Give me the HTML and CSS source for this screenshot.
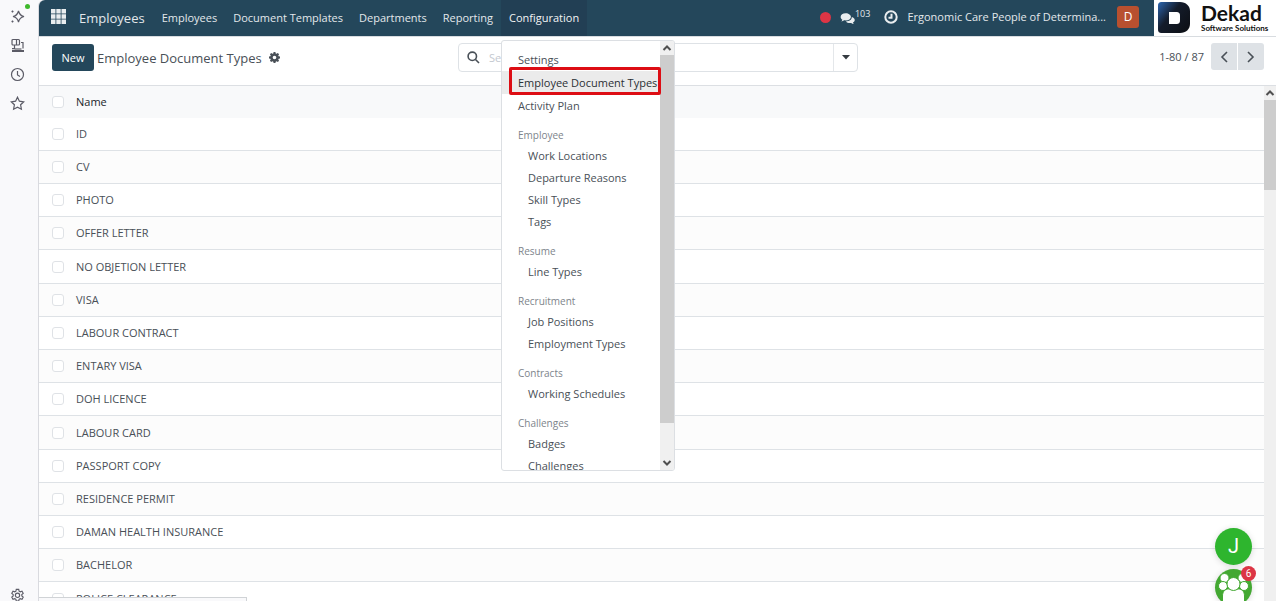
FILE: index.html
```html
<!DOCTYPE html>
<html lang="en">
<head>
<meta charset="utf-8">
<title>Employee Document Types</title>
<link rel="stylesheet" href="styles.css">
</head>
<body>
<aside class="rail">
  <button class="rail-btn" aria-label="Assistant"><svg width="15" height="15" viewBox="0 0 15 15"><path d="M8.500 2Q9.500 6.500 14 7.500Q9.500 8.500 8.500 13Q7.500 8.500 3 7.500Q7.500 6.500 8.500 2Z"/><path d="M2.500 1.500v2M1.500 2.500h2M2.500 11.500v2M1.500 12.500h2"/></svg><i class="dot"></i></button>
  <button class="rail-btn" aria-label="Workspaces"><svg width="15" height="15" viewBox="0 0 15 15"><rect x="2" y="1.500" width="7.500" height="5.500" rx="1"/><path d="M6.500 1.500v5.500M11 4.500h2v6M4.500 7v4M2 10.700h2.500"/><path d="M2 13h12" stroke-width="2"/><path d="M4.500 11h7"/></svg></button>
  <button class="rail-btn" aria-label="History"><svg width="15" height="15" viewBox="0 0 15 15"><circle cx="7.500" cy="7.500" r="6"/><path d="M7.500 4v4l2.500 1.500"/></svg></button>
  <button class="rail-btn" aria-label="Bookmarks"><svg width="15" height="15" viewBox="0 0 15 15"><path d="M7.500 1.200l1.900 4 4.300.6-3.100 3 .8 4.400-3.900-2.100-3.900 2.100.8-4.400-3.100-3 4.300-.6z"/></svg></button>
  <button class="rail-btn rail-end" aria-label="Customize"><svg width="15" height="15" viewBox="0 0 16 16"><path d="M6.700 1.500h2.600l.4 1.900 1.200.7 1.900-.7 1.300 2.300-1.500 1.300v1.500l1.500 1.300-1.300 2.300-1.900-.7-1.200.7-.4 1.900H6.700l-.4-1.900-1.200-.7-1.900.7-1.300-2.300 1.500-1.300V7L1.900 5.700l1.300-2.300 1.900.7 1.200-.7z"/><circle cx="8" cy="7.800" r="2.300"/></svg></button>
</aside>
<div class="app">
  <header class="top">
    <nav class="navbar">
      <button class="apps" aria-label="Apps"><svg width="15" height="15" viewBox="0 0 15 15"><path d="M0 0h4.500v4.500H0zM5.300 0h4.400v4.500H5.300zM10.500 0H15v4.500h-4.500zM0 5.300h4.500v4.400H0zM5.300 5.300h4.400v4.400H5.300zM10.500 5.300H15v4.400h-4.500zM0 10.500h4.500V15H0zM5.300 10.500h4.400V15H5.300zM10.500 10.500H15V15h-4.500z"/></svg></button>
      <a class="brand" href="#">Employees</a>
      <a class="nav-link" href="#">Employees</a>
      <a class="nav-link" href="#">Document Templates</a>
      <a class="nav-link" href="#">Departments</a>
      <a class="nav-link" href="#">Reporting</a>
      <div class="dropdown">
        <button class="nav-link open">Configuration</button>
        <div class="menu">
          <ul class="menu-list">
            <li><a href="#">Settings</a></li>
            <li class="active"><a href="#">Employee Document Types</a><span class="marker"></span></li>
            <li><a href="#">Activity Plan</a></li>
            <li class="group">Employee</li>
            <li class="sub"><a href="#">Work Locations</a></li>
            <li class="sub"><a href="#">Departure Reasons</a></li>
            <li class="sub"><a href="#">Skill Types</a></li>
            <li class="sub"><a href="#">Tags</a></li>
            <li class="group">Resume</li>
            <li class="sub"><a href="#">Line Types</a></li>
            <li class="group">Recruitment</li>
            <li class="sub"><a href="#">Job Positions</a></li>
            <li class="sub"><a href="#">Employment Types</a></li>
            <li class="group">Contracts</li>
            <li class="sub"><a href="#">Working Schedules</a></li>
            <li class="group">Challenges</li>
            <li class="sub"><a href="#">Badges</a></li>
            <li class="sub"><a href="#">Challenges</a></li>
          </ul>
          <div class="scroll">
            <svg width="10" height="14" viewBox="0 0 10 14"><path d="M1.500 9L5 5.500 8.500 9"/></svg>
            <div class="thumb menu-thumb"></div>
            <svg class="down" width="10" height="14" viewBox="0 0 10 14"><path d="M1.500 5L5 8.500 8.500 5"/></svg>
          </div>
        </div>
      </div>
      <div class="tray">
        <i class="rec"></i>
        <button class="chat" aria-label="Messages"><svg width="15" height="14" viewBox="0 0 17 15"><path d="M6.500 1C3 1 .7 2.900.7 5.200c0 1.300.8 2.500 2 3.200-.2.800-.7 1.400-1.200 1.900 1.200-.1 2.300-.6 3.200-1.300.6.100 1.200.1 1.800.1 3.400 0 5.900-1.700 5.900-3.900S9.900 1 6.500 1z"/><path d="M13.400 5.200c0 3.200-3.200 5-6.700 5 1 1.100 2.600 1.800 4.500 1.800.5 0 1 0 1.400-.1.900.8 2 1.300 3.200 1.400-.5-.5-.9-1.100-1.100-1.900 1.200-.6 2-1.600 2-2.800 0-1.500-1.300-2.800-3.300-3.400z"/></svg><span>103</span></button>
        <button class="clock" aria-label="Activities"><svg width="14" height="14" viewBox="0 0 14 14"><circle cx="7" cy="7" r="5.700"/><path d="M7.500 3.700v4H4.500"/></svg></button>
        <button class="company">Ergonomic Care People of Determina...</button>
        <button class="avatar">D</button>
      </div>
    </nav>
    <a class="logo" href="#">
      <svg width="32" height="31" viewBox="0 0 32 31"><defs><linearGradient id="lg" x1="0" y1="0" x2="1" y2="0.800"><stop offset="0" stop-color="#2c66b0"/><stop offset=".45" stop-color="#141c2b"/><stop offset="1" stop-color="#0d1016"/></linearGradient></defs><path d="M4 0h18c6 0 10 4 10 9v13c0 5-4 9-10 9H4c-3 0-4-1-4-4V4c0-3 1-4 4-4z" fill="url(#lg)"/><path d="M11 10h7c3 0 4 1 4 4v4c0 3-1 4-4 4h-7z" fill="#fff"/></svg>
      <span class="logo-text"><b>Dekad</b><small>Software Solutions</small></span>
    </a>
  </header>
  <section class="panel">
    <div class="crumbs">
      <button class="new">New</button>
      <h1>Employee Document Types</h1>
      <button class="gear" aria-label="Actions"><svg width="11" height="11" viewBox="0 0 12 12"><path fill-rule="evenodd" d="M5 0h2l.3 1.500 1 .4L9.600 1 11 2.400l-.9 1.300.4 1L12 5v2l-1.500.3-.4 1 .9 1.300L9.600 11l-1.300-.9-1 .4L7 12H5l-.3-1.500-1-.4-1.300.9L1 9.600l.9-1.300-.4-1L0 7V5l1.500-.3.4-1L1 2.400 2.400 1l1.300.9 1-.4zM6 4a2 2 0 100 4 2 2 0 000-4z"/></svg></button>
    </div>
    <div class="search">
      <svg width="13" height="13" viewBox="0 0 13 13"><circle cx="5.300" cy="5.300" r="4.200"/><path d="M8.500 8.500L12 12"/></svg>
      <input type="text" placeholder="Search..." aria-label="Search">
      <button aria-label="Toggle search panel"><svg width="8" height="5" viewBox="0 0 8 5"><path d="M0 0h8L4 4.500z"/></svg></button>
    </div>
    <div class="pager">
      <span>1-80 / 87</span>
      <div class="pager-btns">
        <button aria-label="Previous"><svg width="8" height="12" viewBox="0 0 8 12"><path d="M7 1L2 6l5 5"/></svg></button>
        <button aria-label="Next"><svg width="8" height="12" viewBox="0 0 8 12"><path d="M1 1l5 5-5 5"/></svg></button>
      </div>
    </div>
  </section>
  <main class="content">
    <div class="list">
      <table>
        <thead><tr><th class="tick"><input type="checkbox" aria-label="Select all"></th><th>Name</th></tr></thead>
        <tbody>
          <tr><td class="tick"><input type="checkbox" aria-label="ID"></td><td>ID</td></tr>
          <tr><td class="tick"><input type="checkbox" aria-label="CV"></td><td>CV</td></tr>
          <tr><td class="tick"><input type="checkbox" aria-label="PHOTO"></td><td>PHOTO</td></tr>
          <tr><td class="tick"><input type="checkbox" aria-label="OFFER LETTER"></td><td>OFFER LETTER</td></tr>
          <tr><td class="tick"><input type="checkbox" aria-label="NO OBJETION LETTER"></td><td>NO OBJETION LETTER</td></tr>
          <tr><td class="tick"><input type="checkbox" aria-label="VISA"></td><td>VISA</td></tr>
          <tr><td class="tick"><input type="checkbox" aria-label="LABOUR CONTRACT"></td><td>LABOUR CONTRACT</td></tr>
          <tr><td class="tick"><input type="checkbox" aria-label="ENTARY VISA"></td><td>ENTARY VISA</td></tr>
          <tr><td class="tick"><input type="checkbox" aria-label="DOH LICENCE"></td><td>DOH LICENCE</td></tr>
          <tr><td class="tick"><input type="checkbox" aria-label="LABOUR CARD"></td><td>LABOUR CARD</td></tr>
          <tr><td class="tick"><input type="checkbox" aria-label="PASSPORT COPY"></td><td>PASSPORT COPY</td></tr>
          <tr><td class="tick"><input type="checkbox" aria-label="RESIDENCE PERMIT"></td><td>RESIDENCE PERMIT</td></tr>
          <tr><td class="tick"><input type="checkbox" aria-label="DAMAN HEALTH INSURANCE"></td><td>DAMAN HEALTH INSURANCE</td></tr>
          <tr><td class="tick"><input type="checkbox" aria-label="BACHELOR"></td><td>BACHELOR</td></tr>
          <tr><td class="tick"><input type="checkbox" aria-label="POLICE CLEARANCE"></td><td>POLICE CLEARANCE</td></tr>
        </tbody>
      </table>
    </div>
    <div class="scroll page-scroll">
      <svg width="10" height="14" viewBox="0 0 10 14"><path d="M1.500 9L5 5.500 8.500 9"/></svg>
      <div class="thumb page-thumb"></div>
    </div>
  </main>
  <div class="status"></div>
</div>
<div class="bubbles">
  <button class="bubble">J</button>
  <button class="bubble team" aria-label="Team chat"><svg width="37" height="37" viewBox="0 0 37 37"><g fill="#fff" stroke="#43a832" stroke-width="1"><circle cx="9.500" cy="9" r="4.500"/><circle cx="27.500" cy="9" r="4.500"/><circle cx="8" cy="17" r="4.500"/><circle cx="29" cy="17" r="4.500"/><path d="M7.500 37V27c0-5 3-7 6-7h10c3 0 6 2 6 7v10z"/><circle cx="18.500" cy="15" r="6.500"/></g></svg><span class="count">6</span></button>
</div>
</body>
</html>
```

FILE: styles.css
```css
* { box-sizing: border-box; }
body {
  margin: 0;
  height: 100vh;
  display: flex;
  overflow: hidden;
  background: #f9f9fb;
  color: #495057;
  font: 11px/20px "Open Sans", "Noto Sans", sans-serif;
}
button {
  margin: 0;
  padding: 0;
  border: 0;
  background: none;
  color: inherit;
  font: inherit;
  display: flex;
  align-items: center;
  justify-content: center;
}
a { color: inherit; text-decoration: none; }
svg { flex: none; }

.rail {
  flex: none;
  width: 38px;
  padding: 2px 3px 0 0;
  display: flex;
  flex-direction: column;
  align-items: center;
}
.rail-btn { position: relative; width: 30px; height: 29px; flex: none; }
.rail-btn svg { fill: none; stroke: #5b5b66; stroke-width: 1.2; }
.rail-end { margin-top: auto; height: 13px; align-items: flex-start; }
.dot {
  position: absolute;
  top: 2px;
  right: 3px;
  width: 5px;
  height: 5px;
  border-radius: 50%;
  background: #3fb92c;
}

.app {
  position: relative;
  flex: 1;
  min-width: 0;
  display: flex;
  flex-direction: column;
  background: #fff;
  border-left: 1px solid #d9dadf;
  border-top-left-radius: 6px;
}
.top { flex: none; display: flex; height: 37px; border-bottom: 1px solid #d8dce0; }
.navbar {
  flex: 1;
  display: flex;
  align-items: stretch;
  background: #24475b;
  color: #e3e8eb;
  border-top-left-radius: 6px;
  padding: 0 15px 0 12px;
}
.apps svg { fill: #e9edef; margin-bottom: 3px; }
.brand { display: flex; align-items: center; margin: 0 9px 0 13px; font-size: 13px; }
.nav-link { display: flex; align-items: center; height: 100%; padding: 0 8px; white-space: nowrap; }
.dropdown { position: relative; }
.nav-link.open { background: #223f54; color: #f2f4f5; }
.menu {
  position: absolute;
  z-index: 2;
  top: 40px;
  left: 0;
  width: 174px;
  height: 431px;
  display: flex;
  overflow: hidden;
  background: #fff;
  border: 1px solid #dcdfe3;
  border-radius: 3px;
  color: #495057;
}
.menu-list { flex: 1; min-width: 0; margin: 0; padding: 7px 0 0; list-style: none; }
.menu-list li { position: relative; height: 23px; padding-left: 16px; line-height: 23px; white-space: nowrap; }
.menu-list .active { background: #ebebeb; color: #2b3035; }
.menu-list .group { height: 28px; padding-top: 8px; line-height: 20px; font-size: 10px; color: #7d848b; }
.menu-list .sub { height: 22px; padding-left: 26px; line-height: 22px; }
.marker {
  position: absolute;
  top: -4px;
  right: -1px;
  bottom: -1px;
  left: 7px;
  border: 3px solid #dd0d14;
  border-radius: 2px;
}
.scroll {
  flex: none;
  width: 14px;
  display: flex;
  flex-direction: column;
  align-items: center;
  background: #f0f0f0;
}
.scroll svg { fill: none; stroke: #505050; stroke-width: 2; }
.scroll .down { margin-top: auto; }
.thumb { width: 100%; background: #cdcdcd; }
.menu-thumb { height: 368px; }

.tray { margin-left: auto; display: flex; align-items: center; white-space: nowrap; padding-bottom: 2px; }
.rec { width: 11px; height: 11px; border-radius: 50%; background: #dc3545; margin-right: 9px; }
.chat { align-items: flex-start; }
.chat svg { margin-top: 4px; fill: #e9edef; }
.chat span { font-size: 9px; line-height: 12px; }
.clock { margin: 0 9px 0 14px; }
.clock svg { fill: none; stroke: #e9edef; stroke-width: 2; }
.avatar { width: 22px; height: 22px; margin-left: 11px; border-radius: 3px; background: #b8502f; color: #fff; font-size: 12px; }

.logo { flex: none; width: 122px; display: flex; align-items: center; gap: 11px; padding: 0 0 2px 4px; color: #111; background: #fff; }
.logo-text { display: flex; flex-direction: column; font-family: Lato, sans-serif; white-space: nowrap; }
.logo-text b { font-size: 21px; line-height: 22px; font-weight: 700; }
.logo-text small { font-size: 8px; line-height: 9px; font-weight: 700; }

.panel { flex: none; height: 48px; display: flex; align-items: flex-start; padding: 6px 12px 0 13px; }
.crumbs { flex: 1; display: flex; align-items: center; height: 29px; }
.new { width: 42px; height: 27px; border-radius: 3px; background: #24475b; color: #fff; }
.crumbs h1 { margin: 0 7px 0 3px; font-size: 13px; font-weight: 400; }
.gear svg { fill: #495057; }
.search {
  flex: none;
  width: 400px;
  height: 29px;
  display: flex;
  align-items: center;
  border: 1px solid #dee2e6;
  border-radius: 4px;
  padding-left: 8px;
}
.search > svg { fill: none; stroke: #495057; stroke-width: 1.600; }
.search input { flex: 1; min-width: 0; margin-left: 9px; padding: 0; border: 0; outline: 0; font: inherit; background: none; }
.search input::placeholder { color: #c3c8cf; }
.search button { width: 24px; height: 27px; border-left: 1px solid #e4e7ea; }
.search button svg { fill: #343a40; }
.pager { flex: 1; display: flex; align-items: center; justify-content: flex-end; gap: 7px; height: 27px; }
.pager-btns { display: flex; gap: 1px; }
.pager-btns button { width: 26px; height: 27px; background: #dee2e6; }
.pager-btns button:first-child { border-radius: 3px 0 0 3px; }
.pager-btns button:last-child { border-radius: 0 3px 3px 0; }
.pager-btns svg { fill: none; stroke: #495057; stroke-width: 1.600; }

.content { flex: 1; min-height: 0; display: flex; border-top: 1px solid #dcdfe3; }
.list { flex: 1; min-width: 0; overflow: hidden; }
table { width: 100%; border-collapse: separate; border-spacing: 0; }
th { height: 32px; padding: 0; background: #f8f9fa; text-align: left; font-weight: 400; color: #212529; }
td { height: 33px; padding: 0; border-bottom: 1px solid #dee2e6; }
tr:nth-child(5n) td { height: 34px; }
tbody tr:nth-child(even) { background: #fcfcfc; }
.tick { width: 37px; padding-left: 13px; }
.tick input {
  appearance: none;
  display: block;
  width: 12px;
  height: 12px;
  margin: 0;
  border: 1px solid #dfe2e6;
  border-radius: 3px;
  background: #fff;
}
.page-scroll { width: 12px; }
.page-thumb { height: 90px; }

.status {
  position: absolute;
  left: 0;
  bottom: 0;
  width: 208px;
  height: 4px;
  border-top: 1px solid #d0d3d6;
  border-right: 1px solid #d0d3d6;
  background: #f9f9fb;
}
.bubbles { position: absolute; right: 24px; top: 528px; display: flex; flex-direction: column; gap: 4px; height: 73px; }
.bubble {
  position: relative;
  flex: none;
  width: 37px;
  height: 37px;
  border-radius: 50%;
  background: #2eb52e;
  color: #fff;
  font: 20px/37px Roboto, sans-serif;
  box-shadow: 0 1px 6px rgba(0, 0, 0, .15);
}
.team { background: #43a832; }
.team svg { border-radius: 50%; }
.count {
  position: absolute;
  top: -3px;
  right: -4px;
  width: 15px;
  height: 15px;
  border-radius: 50%;
  background: #dc3545;
  font-size: 10px;
  line-height: 15px;
}
```
